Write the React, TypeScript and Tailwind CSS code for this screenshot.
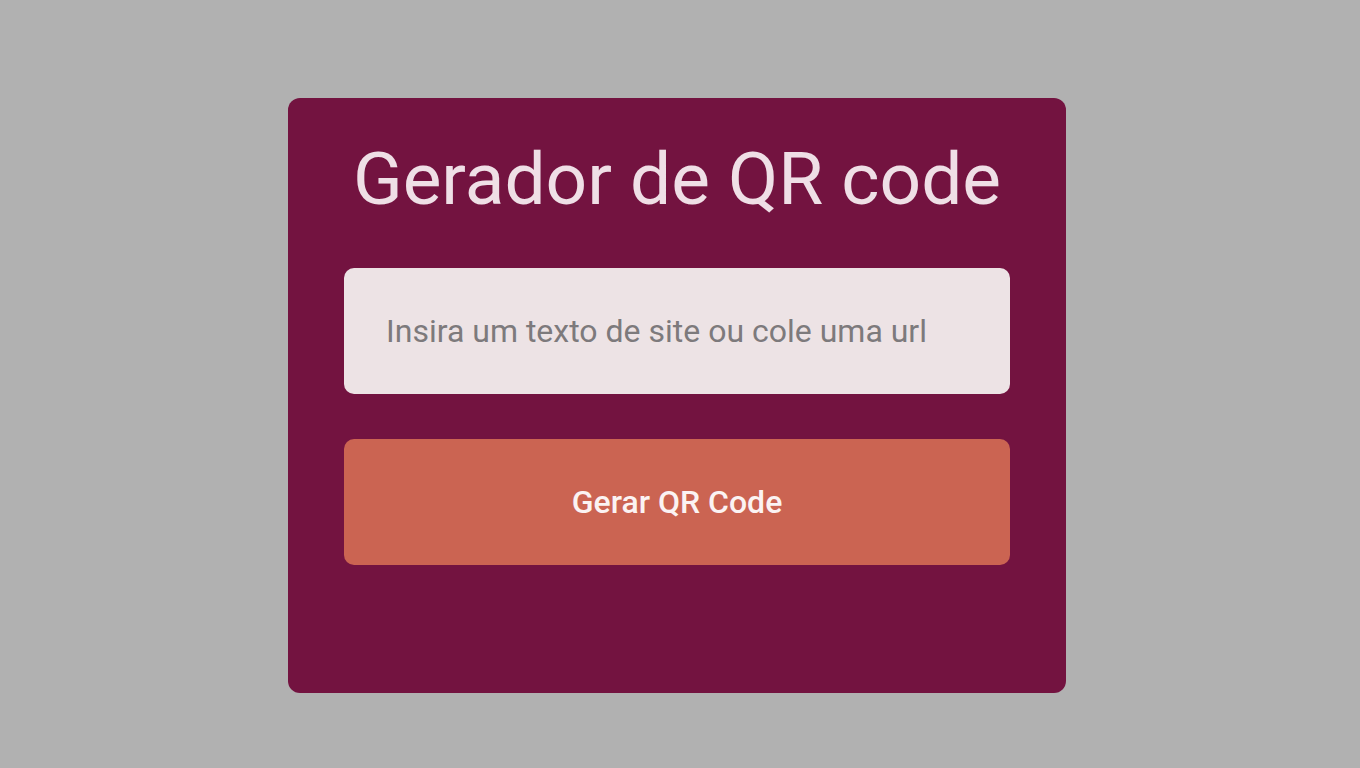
export default function App() {
  return (
    <div
      className="min-h-screen w-full bg-[#b1b1b1] flex justify-center pt-[98px] pr-[6px]"
      style={{ fontFamily: "Roboto, 'Liberation Sans', sans-serif" }}
    >
      <div className="w-[778px] h-[595px] bg-[#731340] rounded-[12px] px-[56px] pt-[38px] flex flex-col">
        <h1 className="text-center text-[73px] leading-[86px] text-[#efdfe6] font-normal">
          Gerador de QR code
        </h1>
        <input
          type="text"
          placeholder="Insira um texto de site ou cole uma url"
          className="mt-[46px] h-[126px] w-full rounded-[10px] bg-[#ede3e5] px-[42px] text-[32px] text-[#333] placeholder:text-[#7d7a7c] outline-none"
        />
        <button className="mt-[45px] h-[126px] w-full rounded-[10px] bg-[#cb6452] text-[32px] font-medium text-[#fbf3f3]">
          Gerar QR Code
        </button>
      </div>
    </div>
  )
}
